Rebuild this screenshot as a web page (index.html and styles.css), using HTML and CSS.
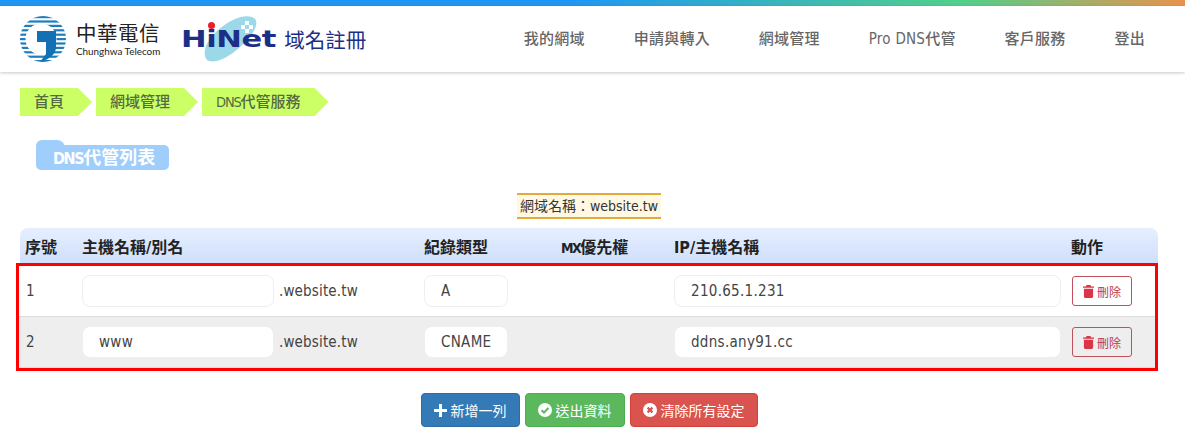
FILE: index.html
```html
<!DOCTYPE html>
<html lang="zh-Hant">
<head>
<meta charset="utf-8">
<title>DNS代管列表</title>
<link rel="stylesheet" href="styles.css">
</head>
<body>
<div class="topline"></div>
<header class="header">
  <div class="brand">
    <svg class="cht-mark" viewBox="0 0 46 46" width="46" height="46" aria-hidden="true">
      <defs>
        <clipPath id="disc"><circle cx="23" cy="23" r="23"/></clipPath>
      </defs>
      <g clip-path="url(#disc)">
        <g fill="#1f7dbd">
          <rect y="0" width="46" height="2.2"/>
          <rect y="4.4" width="46" height="2.2"/>
          <rect y="8.8" width="46" height="2.2"/>
          <rect y="13.2" width="46" height="2.2"/>
          <rect y="17.6" width="46" height="2.2"/>
          <rect y="22" width="46" height="2.2"/>
          <rect y="26.4" width="46" height="2.2"/>
          <rect y="30.8" width="46" height="2.2"/>
          <rect y="35.2" width="46" height="2.2"/>
          <rect y="39.6" width="46" height="2.2"/>
          <rect y="44" width="46" height="2"/>
        </g>
        <circle cx="21" cy="23" r="15.5" fill="#fff"/>
        <path d="M17 15H36V31C36 38 30 43 20 46L26 38V26H17Z" fill="#1470b4"/>
      </g>
    </svg>
    <div class="cht-text">
      <span class="cht-zh">中華電信</span>
      <span class="cht-en">Chunghwa Telecom</span>
    </div>
    <div class="hinet">
      <svg class="hinet-leaf" viewBox="0 0 60 50" width="60" height="50" aria-hidden="true">
        <path d="M4 46C-1 40 2 28 14 17C26 6 40 0 49 3C57 6 53 16 45 25C34 38 14 52 4 46Z" fill="#9cd9e8"/>
        <g fill="#fff">
          <rect x="42" y="7" width="4" height="4"/>
          <rect x="38" y="11" width="4" height="4"/>
          <rect x="46" y="11" width="4" height="4"/>
          <rect x="42" y="15" width="4" height="4"/>
        </g>
      </svg>
      <span class="hinet-word">HiNet</span>
      <span class="hinet-dot"></span>
      <span class="hinet-zh">域名註冊</span>
    </div>
  </div>
  <nav class="nav">
    <a>我的網域</a>
    <a>申請與轉入</a>
    <a>網域管理</a>
    <a>Pro DNS代管</a>
    <a>客戶服務</a>
    <a>登出</a>
  </nav>
</header>

<main class="main">
  <div class="crumbs">
    <span class="crumb">首頁</span>
    <span class="crumb">網域管理</span>
    <span class="crumb"><span class="crumb-latin">DNS</span>代管服務</span>
  </div>

  <div class="title-wrap"><h1 class="title"><span class="title-latin">DNS</span>代管列表</h1></div>

  <div class="domain-wrap"><span class="domain">網域名稱：website.tw</span></div>

  <div class="table">
    <div class="row head">
      <div>序號</div>
      <div>主機名稱/別名</div>
      <div>紀錄類型</div>
      <div><span class="head-latin">MX</span>優先權</div>
      <div>IP/主機名稱</div>
      <div>動作</div>
    </div>
    <div class="marked">
      <div class="row body">
        <div class="seq">1</div>
        <div class="host"><input class="field name" value=""><span class="suffix">.website.tw</span></div>
        <div><input class="field type" value="A"></div>
        <div></div>
        <div><input class="field ip" value="210.65.1.231"></div>
        <div>
          <button class="del">
            <svg viewBox="0 0 12 14" width="11" height="13" aria-hidden="true"><path d="M4 0H8L9 1.5H12V3H0V1.5H3ZM1 4H11V12.5C11 13.3 10.4 14 9.6 14H2.4C1.6 14 1 13.3 1 12.5Z" fill="#dc3545"/></svg>
            <span>刪除</span>
          </button>
        </div>
      </div>
      <div class="row body alt">
        <div class="seq">2</div>
        <div class="host"><input class="field name" value="www"><span class="suffix">.website.tw</span></div>
        <div><input class="field type" value="CNAME"></div>
        <div></div>
        <div><input class="field ip" value="ddns.any91.cc"></div>
        <div>
          <button class="del">
            <svg viewBox="0 0 12 14" width="11" height="13" aria-hidden="true"><path d="M4 0H8L9 1.5H12V3H0V1.5H3ZM1 4H11V12.5C11 13.3 10.4 14 9.6 14H2.4C1.6 14 1 13.3 1 12.5Z" fill="#dc3545"/></svg>
            <span>刪除</span>
          </button>
        </div>
      </div>
    </div>
  </div>

  <div class="actions">
    <button class="btn blue">
      <svg viewBox="0 0 14 14" width="13" height="13" aria-hidden="true"><path d="M5.4 0H8.6V5.4H14V8.6H8.6V14H5.4V8.6H0V5.4H5.4Z" fill="#fff"/></svg>
      <span>新增一列</span>
    </button>
    <button class="btn green">
      <svg viewBox="0 0 14 14" width="14" height="14" aria-hidden="true"><circle cx="7" cy="7" r="7" fill="#fff"/><path d="M3.6 7.2L6 9.6L10.4 5" fill="none" stroke="#5cb85c" stroke-width="2"/></svg>
      <span>送出資料</span>
    </button>
    <button class="btn red">
      <svg viewBox="0 0 14 14" width="14" height="14" aria-hidden="true"><circle cx="7" cy="7" r="7" fill="#fff"/><path d="M4.6 4.6L9.4 9.4M9.4 4.6L4.6 9.4" fill="none" stroke="#d9534f" stroke-width="2.2"/></svg>
      <span>清除所有設定</span>
    </button>
  </div>
</main>
</body>
</html>
```
FILE: styles.css
```css
* { box-sizing: border-box; }
html, body { margin: 0; padding: 0; }
body {
  width: 1185px;
  height: 448px;
  overflow: hidden;
  background: #fff;
  color: #444;
  font-family: "DejaVu Sans", "Noto Sans CJK TC", sans-serif;
  font-stretch: condensed;
  font-size: 15px;
}
.topline {
  height: 6px;
  background: linear-gradient(90deg, #1e96f5 0%, #1e96f5 48%, #50d08a 81%, #e8924c 100%);
}
.header {
  height: 66px;
  display: flex;
  justify-content: space-between;
  align-items: center;
  padding: 0 40px 0 20px;
  background: #fff;
  box-shadow: 0 1px 3px rgba(0, 0, 0, .22);
  position: relative;
}
.brand { display: flex; align-items: center; }
.cht-mark { flex: none; }
.cht-text {
  display: flex;
  flex-direction: column;
  margin-left: 10px;
  color: #222;
  font-stretch: normal;
}
.cht-zh {
  font-family: "Noto Sans CJK TC", sans-serif;
  font-size: 20.5px;
  line-height: 23px;
  letter-spacing: .5px;
  white-space: nowrap;
}
.cht-en {
  font-family: "Lato", sans-serif;
  font-size: 9.9px;
  line-height: 14px;
  white-space: nowrap;
}
.hinet {
  position: relative;
  display: flex;
  align-items: center;
  margin-left: 21px;
  height: 50px;
  color: #1c2f87;
}
.hinet-leaf { position: absolute; left: 22px; top: 0; }
.hinet-word {
  display: block;
  position: relative;
  width: 96px;
  font-family: "DejaVu Sans", sans-serif;
  font-stretch: normal;
  font-weight: 700;
  font-size: 23px;
  letter-spacing: -.3px;
  transform: scaleX(1.33);
  transform-origin: left center;
}
.hinet-dot {
  position: absolute;
  left: 27px;
  top: 8px;
  width: 7px;
  height: 7px;
  border-radius: 50%;
  background: #e8202a;
}
.hinet-zh {
  position: relative;
  margin-left: 7px;
  font-family: "Noto Sans CJK TC", sans-serif;
  font-size: 20.5px;
  white-space: nowrap;
}
.nav {
  display: flex;
  gap: 48.9px;
  padding-bottom: 4px;
  font-size: 15px;
  font-weight: 500;
  color: #666;
  white-space: nowrap;
  letter-spacing: .25px;
}
.main { padding: 16px 27px 0 20px; }
.crumbs { display: flex; gap: 4px; }
.crumb {
  height: 28px;
  line-height: 28px;
  padding: 0 28px 0 14px;
  background: #ccff66;
  color: #556b44;
  font-size: 15px;
  font-weight: 500;
  clip-path: polygon(0 0, calc(100% - 14px) 0, 100% 50%, calc(100% - 14px) 100%, 0 100%);
}
.crumb-latin { font-size: 14.5px; letter-spacing: -1.2px; }
.title-wrap { padding: 24px 0 0 16px; display: flex; }
.title {
  position: relative;
  margin: 5px 0 0;
  width: 133px;
  height: 25px;
  padding-left: 17px;
  background: #9fcdfc;
  border-radius: 0 5px 5px 5px;
  color: #fff;
  font-size: 18px;
  font-weight: 700;
  line-height: 25px;
  white-space: nowrap;
}
.title-latin { font-size: 16px; letter-spacing: -1.4px; }
.title::before {
  content: "";
  position: absolute;
  left: 0;
  top: -5px;
  width: 29px;
  height: 12px;
  background: #9fcdfc;
  border-radius: 6px 8px 0 0;
}
.domain-wrap { display: flex; justify-content: center; margin: 23px 0 9px; padding-left: 0; }
.domain {
  display: block;
  height: 26px;
  line-height: 22px;
  padding: 0 3px;
  background: #fff8e3;
  border-top: 2px solid #e2a93f;
  border-bottom: 2px solid #e2a93f;
  color: #333;
  font-size: 14px;
  white-space: nowrap;
}
.table { width: 1138px; }
.row {
  display: grid;
  grid-template-columns: 62px 342px 137px 113px 397px 1fr;
  align-items: center;
}
.head {
  height: 35px;
  padding-left: 0;
  background: linear-gradient(180deg, #e6efff 0%, #cfdffb 100%);
  border-radius: 8px 8px 0 0;
  color: #222;
  font-weight: 700;
  font-size: 16px;
}
.head > div:first-child { padding-left: 5px; }
.head-latin { font-size: 14px; letter-spacing: -1.5px; }
.marked {
  margin-left: -4px;
  border: 3px solid #f00;
}
.body { padding-left: 1px; height: 51px; border-bottom: 1px solid #ddd; }
.body.alt { background: #eee; height: 51px; border-bottom: 1px solid #ddd; }
.seq { padding-left: 6px; color: #444; }
.host { display: flex; align-items: center; }
.field {
  display: block;
  height: 32px;
  padding: 0 16px;
  border: 1px solid #eee;
  border-radius: 8px;
  background: #fff;
  color: #444;
  font: inherit;
  letter-spacing: .3px;
  outline: none;
}
.name { width: 192px; }
.suffix { margin-left: 5px; letter-spacing: .15px; }
.type { width: 84px; }
.ip { width: 387px; }
.del {
  display: flex;
  align-items: center;
  justify-content: center;
  gap: 3px;
  width: 60px;
  height: 30px;
  margin-left: 1px;
  padding: 0;
  border: 1px solid #c0505a;
  border-radius: 3px;
  background: transparent;
  color: #c0394b;
  font-family: inherit;
  font-size: 12px;
}
.actions {
  display: flex;
  justify-content: center;
  gap: 5px;
  margin-top: 22px;
}
.btn {
  display: flex;
  align-items: center;
  justify-content: center;
  gap: 4px;
  height: 34px;
  padding: 0;
  border: 1px solid transparent;
  border-radius: 4px;
  color: #fff;
  font-family: inherit;
  font-size: 14px;
}
.blue { width: 99px; background: #337ab7; border-color: #2e6da4; }
.green { width: 100px; background: #5cb85c; border-color: #4cae4c; }
.red { width: 128px; background: #d9534f; border-color: #d43f3a; }
```
